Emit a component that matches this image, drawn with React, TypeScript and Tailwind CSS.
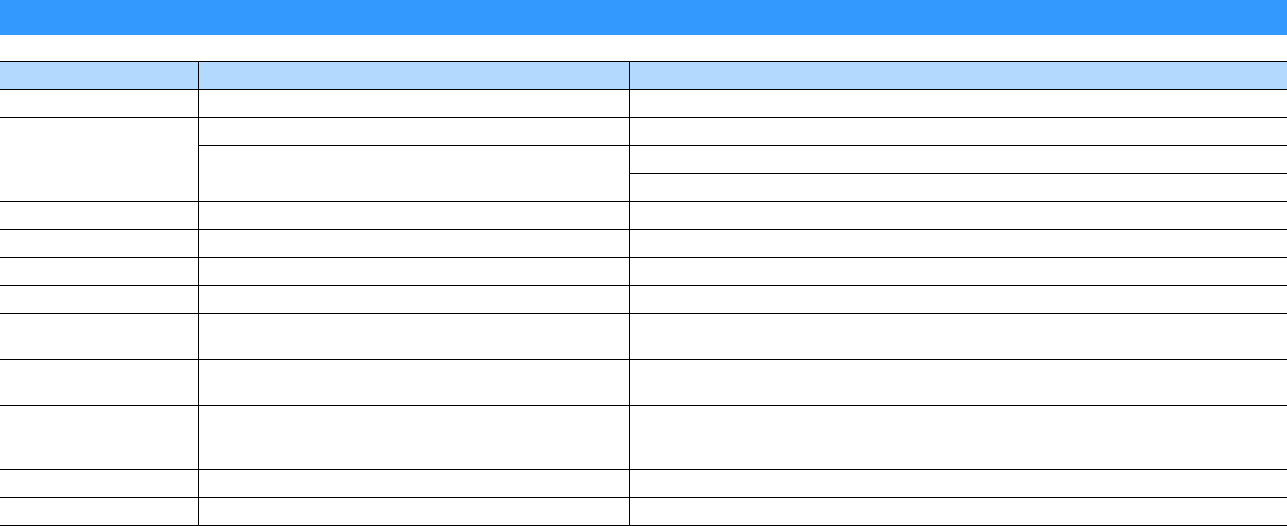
type Cell = { key: string; row: string; col: string; last?: boolean }

// row heights include the 1px bottom border
const rowHeights = '28px 28px 28px 28px 28px 28px 28px 28px 28px 46px 46px 64px 28px 28px'

function buildCells(): Cell[] {
  const cells: Cell[] = []
  // data rows start at grid row 2 (row 1 is the header)
  for (let r = 2; r <= 14; r++) {
    if (r === 3) {
      cells.push({ key: `a${r}`, row: 'row-span-3', col: 'col-start-1' })
    } else if (r !== 4 && r !== 5) {
      cells.push({ key: `a${r}`, row: '', col: 'col-start-1' })
    }
    if (r === 4) {
      cells.push({ key: `b${r}`, row: 'row-span-2', col: 'col-start-2' })
    } else if (r !== 5) {
      cells.push({ key: `b${r}`, row: '', col: 'col-start-2' })
    }
    cells.push({ key: `c${r}`, row: '', col: 'col-start-3', last: true })
  }
  return cells
}

export default function App() {
  const cells = buildCells()

  return (
    <div className="min-h-screen bg-white" style={{ fontFamily: '"Liberation Sans", Arial, sans-serif' }}>
      <div className="h-[35px] bg-[#3399ff]" />

      <div className="mt-[26px] border-t border-black">
        <div
          className="grid grid-cols-[199px_431px_1fr] grid-flow-row-dense"
          style={{ gridTemplateRows: rowHeights }}
        >
          {/* header */}
          <div className="bg-[#b3d9ff] border-b border-r border-black" />
          <div className="bg-[#b3d9ff] border-b border-r border-black" />
          <div className="bg-[#b3d9ff] border-b border-black" />

          {cells.map((c) => (
            <div
              key={c.key}
              className={`${c.col} ${c.row} border-b border-black ${c.last ? '' : 'border-r'}`}
            />
          ))}
        </div>
      </div>
    </div>
  )
}
